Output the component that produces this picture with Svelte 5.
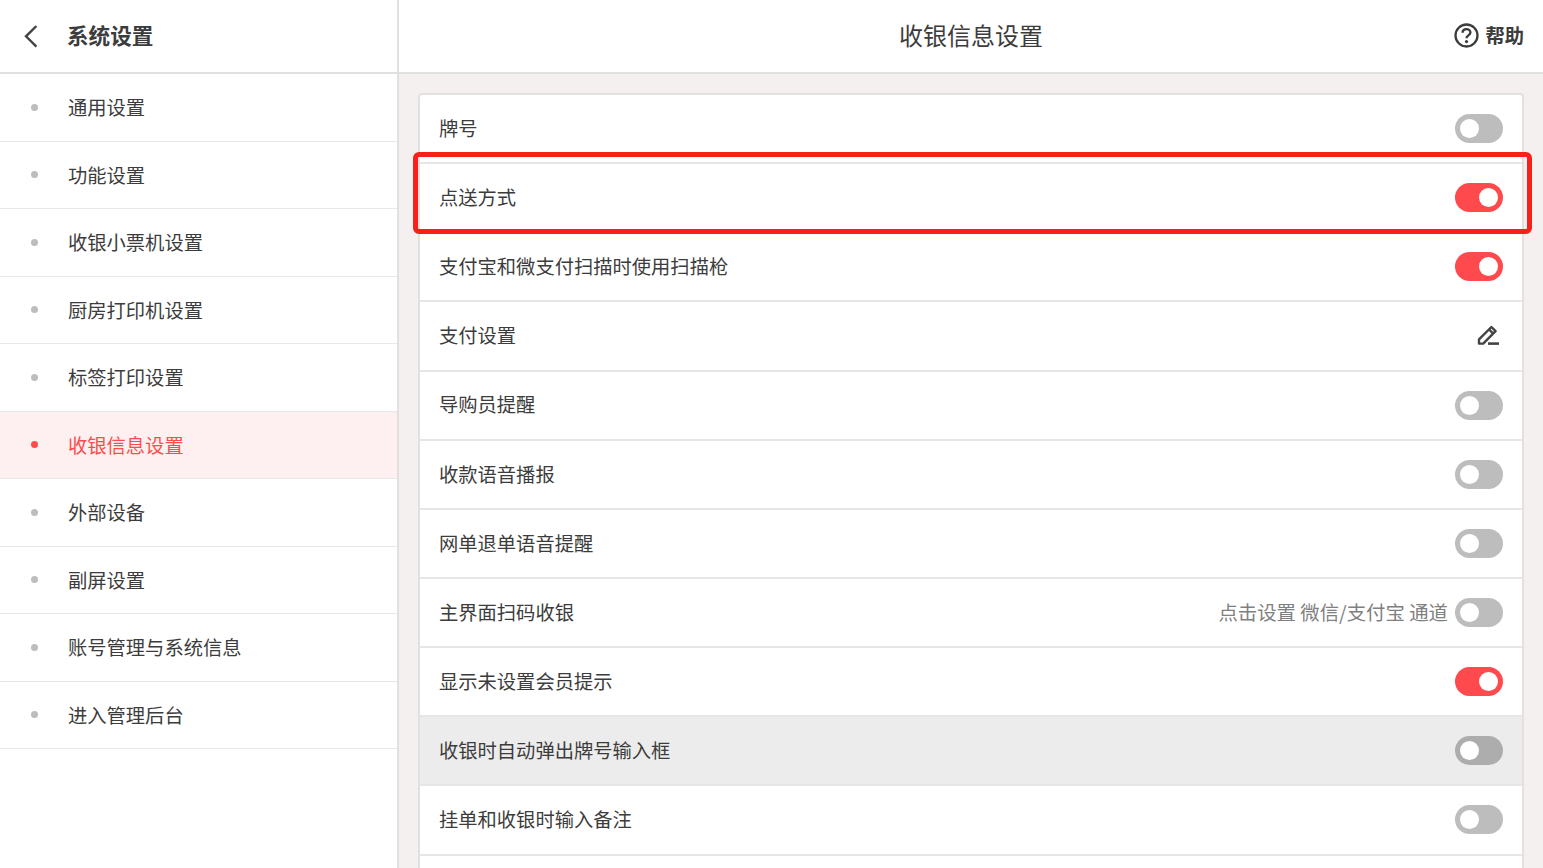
<script>
  const menu = ['通用设置', '功能设置', '收银小票机设置', '厨房打印机设置', '标签打印设置', '收银信息设置', '外部设备', '副屏设置', '账号管理与系统信息', '进入管理后台'];
  const activeMenu = '收银信息设置';

  const rows = [
    { label: '牌号', on: false },
    { label: '点送方式', on: true, marked: true },
    { label: '支付宝和微支付扫描时使用扫描枪', on: true },
    { label: '支付设置', edit: true },
    { label: '导购员提醒', on: false },
    { label: '收款语音播报', on: false },
    { label: '网单退单语音提醒', on: false },
    { label: '主界面扫码收银', on: false, hint: '点击设置 微信/支付宝 通道' },
    { label: '显示未设置会员提示', on: true },
    { label: '收银时自动弹出牌号输入框', on: false, pressed: true },
    { label: '挂单和收银时输入备注', on: false },
    { label: '', on: false }
  ];
</script>

<div class="page">
  <aside class="side">
    <header class="side-head">
      <svg class="back" width="16" height="24" viewBox="0 0 16 24" fill="none">
        <path d="M13.4 2 3 12.3l10.4 10.3" stroke="#444" stroke-width="2.4" />
      </svg>
      <h1>系统设置</h1>
    </header>
    <nav>
      {#each menu as item}
        <div class="menu-item" class:active={item === activeMenu}>
          <span class="dot"></span>
          <span>{item}</span>
        </div>
      {/each}
    </nav>
  </aside>

  <main class="main">
    <header class="main-head">
      <h2>收银信息设置</h2>
      <div class="help">
        <svg width="25" height="25" viewBox="0 0 25 25" fill="none">
          <circle cx="12.5" cy="12.5" r="11" stroke="#3c3c3c" stroke-width="2.3" />
          <path d="M8.6 9.8c0-2.3 1.7-3.7 3.9-3.7s3.9 1.4 3.9 3.4c0 2.9-3.9 2.8-3.9 5.7" stroke="#3c3c3c" stroke-width="2.4" />
          <circle cx="12.5" cy="18.6" r="1.6" fill="#3c3c3c" />
        </svg>
        <span>帮助</span>
      </div>
    </header>
    <div class="content">
      <div class="card">
        {#each rows as row}
          <div class="row" class:pressed={row.pressed} class:marked={row.marked}>
            <span class="label">{row.label}</span>
            <div class="right">
              {#if row.hint}<span class="hint">{row.hint}</span>{/if}
              {#if row.edit}
                <svg class="pen" width="24" height="22" viewBox="0 0 24 22" fill="none">
                  <path d="M2 19.6v-4.2L14.4 3l4.2 4.2L6.2 19.6Z" stroke="#444" stroke-width="2.4" stroke-linejoin="round" />
                  <path d="M12 5.4l4.2 4.2" stroke="#444" stroke-width="2.2" />
                  <path d="M11 19.6h11" stroke="#444" stroke-width="2.6" />
                </svg>
              {:else}
                <span class="toggle" class:on={row.on}><span class="knob"></span></span>
              {/if}
            </div>
          </div>
        {/each}
      </div>
    </div>
  </main>
  <div class="mark"></div>
</div>

<style>
  :global(body) {
    margin: 0;
    overflow: hidden;
  }

  .page {
    display: flex;
    position: relative;
    width: 1543px;
    height: 868px;
    overflow: hidden;
    background: #fff;
    color: #3c3c3c;
    font-family: "Noto Sans CJK SC", "Noto Sans", sans-serif;
    font-size: 19.3px;
  }

  .side {
    width: 397px;
    flex: none;
    border-right: 2px solid #e2dfdf;
  }

  .side-head {
    display: flex;
    align-items: center;
    height: 72px;
    border-bottom: 2px solid #e0e0e0;
  }

  .back {
    margin-left: 23px;
  }

  .side-head h1 {
    margin: -2px 0 0 28px;
    font-size: 21.6px;
    font-weight: 700;
    line-height: 1;
  }

  .menu-item {
    display: flex;
    align-items: center;
    height: 66.5px;
    border-bottom: 1px solid #e8e8e8;
  }

  .dot {
    width: 7px;
    height: 7px;
    margin: 0 30px 0 31px;
    border-radius: 50%;
    background: #bdbdbd;
  }

  .menu-item.active {
    background: #fef0f0;
    color: #ff4a4d;
  }

  .menu-item.active .dot {
    background: #ff4a4d;
  }

  .main {
    flex: 1;
    min-width: 0;
    display: flex;
    flex-direction: column;
  }

  .main-head {
    position: relative;
    display: flex;
    align-items: center;
    justify-content: center;
    height: 72px;
    flex: none;
    border-bottom: 2px solid #e0e0e0;
  }

  .main-head h2 {
    margin: -2px 0 0 0;
    font-size: 24px;
    font-weight: 400;
    line-height: 1;
  }

  .help {
    position: absolute;
    right: 19px;
    top: 0;
    bottom: 0;
    display: flex;
    align-items: center;
    gap: 6px;
    font-weight: 700;
  }

  .help span {
    margin-top: -2px;
  }

  .help svg {
    margin-top: -1px;
  }

  .content {
    flex: 1;
    min-height: 0;
    padding: 19px 19px 0;
    background: #f4f0f0;
  }

  .card {
    border: 2px solid #e2e0e0;
    border-radius: 4px 4px 0 0;
    background: #fff;
  }

  .row {
    display: flex;
    align-items: center;
    justify-content: space-between;
    height: 67.15px;
    padding: 0 19px;
    border-bottom: 2px solid #e6e6e6;
  }

  .row.pressed {
    background: #ececec;
  }

  .label {
    margin-top: -1.4px;
  }

  .right {
    display: flex;
    align-items: center;
    gap: 7px;
  }

  .hint {
    color: #808080;
    font-size: 19.4px;
    margin-top: -1.4px;
  }

  .pen {
    margin: -2px 2px 0 0;
  }

  .toggle {
    display: flex;
    align-items: center;
    justify-content: flex-start;
    width: 48px;
    height: 29px;
    padding: 0 5px;
    box-sizing: border-box;
    border-radius: 15px;
    background: #bdbdbd;
  }

  .pressed .toggle {
    background: #adadad;
  }

  .toggle.on {
    justify-content: flex-end;
    background: #ff4a4d;
  }

  .knob {
    width: 19px;
    height: 19px;
    border-radius: 50%;
    background: #fff;
  }

  /* annotation drawn over the screenshot */
  .mark {
    position: absolute;
    left: 413px;
    top: 152px;
    width: 1119px;
    height: 82px;
    box-sizing: border-box;
    border: 5px solid #f8201a;
    border-radius: 6px;
    pointer-events: none;
  }
</style>
